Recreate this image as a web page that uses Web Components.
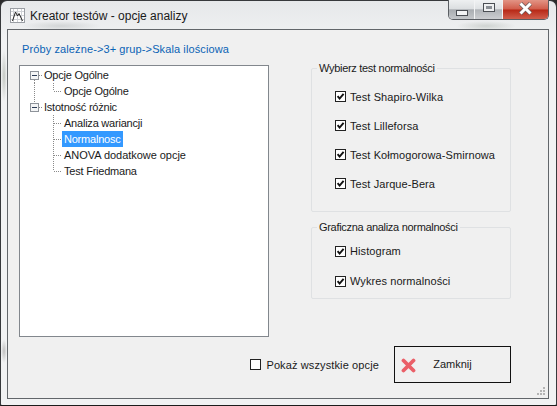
<!DOCTYPE html>
<html lang="pl"><head><meta charset="utf-8">
<style>
html,body{margin:0;padding:0;width:557px;height:406px;overflow:hidden;background:#2a2a2a;font:11px "Liberation Sans",Arial,sans-serif;color:#1a1a1a}
</style></head><body>
<x-window>
  <x-titlebar slot="title">Kreator testów - opcje analizy</x-titlebar>
  <x-path>Próby zależne-&gt;3+ grup-&gt;Skala ilościowa</x-path>
  <x-tree slot="left">
    <x-node top first>Opcje Ogólne</x-node>
    <x-node child through last>Opcje Ogólne</x-node>
    <x-node top final>Istotność różnic</x-node>
    <x-node child>Analiza wariancji</x-node>
    <x-node child selected>Normalnosc</x-node>
    <x-node child style="letter-spacing:-.04px">ANOVA dodatkowe opcje</x-node>
    <x-node child last>Test Friedmana</x-node>
  </x-tree>
  <x-group slot="right" label="Wybierz test normalności" style="height:144px;--first:13px">
    <x-check checked>Test Shapiro-Wilka</x-check>
    <x-check checked>Test Lilleforsa</x-check>
    <x-check checked>Test Kołmogorowa-Smirnowa</x-check>
    <x-check checked>Test Jarque-Bera</x-check>
  </x-group>
  <x-group slot="right" label="Graficzna analiza normalności" style="height:72px;--first:8px;--rh:30px">
    <x-check checked>Histogram</x-check>
    <x-check checked>Wykres normalności</x-check>
  </x-group>
  <x-check slot="footer" style="margin:0 15px 0 0;--gap:5px;--ls:.12px">Pokaż wszystkie opcje</x-check>
  <x-button slot="footer">Zamknij</x-button>
</x-window>
<script>
function def(name, html){
  customElements.define(name, class extends HTMLElement{
    connectedCallback(){
      if(this.shadowRoot) return;
      const r=this.attachShadow({mode:'open'});
      r.innerHTML = typeof html==='function' ? html(this) : html;
    }
  });
}
def('x-window',`<style>
:host{display:block;width:557px;height:406px;box-sizing:border-box}
.frame{box-sizing:border-box;width:557px;height:406px;border-radius:7px 7px 2px 2px;border:1px solid #37393c;border-bottom-color:#1c1c1c;
 background:
  radial-gradient(ellipse 40px 5px at 60px 25px,#d2d5d6,transparent),
  radial-gradient(ellipse 30px 5px at 485px 25px,#cfd3d1,transparent),
  radial-gradient(ellipse 3px 26px at 3px 75px,#c3c7c2,transparent),
  radial-gradient(ellipse 3px 12px at 3px 350px,#bfbfbf,transparent),
  linear-gradient(#e6e8ea,#f1f2f3 40px);
 display:flex;flex-direction:column;padding:0 7px 6px 6px}
.client{flex:1;border:1px solid #62666a;background:#f0f0f0;display:flex;flex-direction:column;padding:11px 37px 0 11px;box-sizing:border-box;min-height:0;position:relative}
.main{display:flex;justify-content:space-between;margin-top:8px}
.right{display:flex;flex-direction:column;gap:15px;width:200px;padding-top:3px}
.foot{display:flex;justify-content:flex-end;align-items:center;margin-top:9px}
.grip{position:absolute;right:2px;bottom:2px}
</style><div class="frame"><slot name="title"></slot><div class="client"><slot></slot>
<div class="main"><slot name="left"></slot><div class="right"><slot name="right"></slot></div></div>
<div class="foot"><slot name="footer"></slot></div>
<svg class="grip" width="11" height="11" fill="#b4b4b4"><rect x="8" y="2" width="2" height="2"/><rect x="8" y="5" width="2" height="2"/><rect x="8" y="8" width="2" height="2"/><rect x="5" y="5" width="2" height="2"/><rect x="5" y="8" width="2" height="2"/><rect x="2" y="8" width="2" height="2"/></svg>
</div></div>`);
def('x-titlebar',`<style>
:host{display:flex;height:28px;flex:none;position:relative;align-items:flex-start}
.ic{margin:7px 0 0 3px;flex:none}
.t{margin:7px 0 0 5px;font:12px/16px "Liberation Sans",Arial,sans-serif;color:#1a1a1a}
.btns{position:absolute;right:0;top:-1px;display:flex;height:20px;border:1px solid #5a5e63;border-top:0;border-radius:0 0 5px 5px;overflow:hidden;box-sizing:border-box}
.b{height:100%;display:flex;align-items:center;justify-content:center;box-sizing:border-box}
.m{width:26px;background:linear-gradient(#eef0f1 0,#dcdfe1 45%,#a9adb1 52%,#c4c7ca 100%);border-right:1px solid #f2f3f4}
.x{width:28px;background:linear-gradient(#f0f2f3 0,#dfe2e4 45%,#b0b4b8 52%,#ccced1 100%);border-right:1px solid #f2f3f4}
.c{width:45px;background:linear-gradient(#e29485 0,#d2604e 45%,#b82a18 54%,#d05e4c 100%)}
</style>
<svg class="ic" width="15" height="15" viewBox="0 0 15 15"><rect width="15" height="15" fill="#fff"/><path d="M0 3.5H15M0 7.5H15M0 11.5H15M3.5 0V15M7.5 0V15M11.5 0V15" stroke="#cfd2d6"/><rect x=".5" y=".5" width="14" height="14" fill="none" stroke="#9a9ea4"/><path d="M2.5 13L5.5 4L7.5 8L9 5.5L12.5 13" fill="none" stroke="#222" stroke-width="1"/></svg>
<span class="t"><slot></slot></span>
<div class="btns"><div class="b m"><svg width="12" height="6" style="margin-top:6px"><rect x=".5" y=".5" width="11" height="5" fill="#f2f3f4" stroke="#4a4e53"/></svg></div>
<div class="b x"><svg width="12" height="9" style="margin-bottom:5px"><rect x=".5" y=".5" width="11" height="8" fill="#eef0f1" stroke="#4a4e53"/><rect x="3" y="3" width="6" height="3" fill="#8a8f95"/></svg></div>
<div class="b c"><svg width="15" height="13" viewBox="0 0 15 13" style="margin-bottom:2px"><path d="M2.5 1.5L12.5 11.5M12.5 1.5L2.5 11.5" stroke="#6a5a58" stroke-width="4.4"/><path d="M2.5 1.5L12.5 11.5M12.5 1.5L2.5 11.5" stroke="#fff" stroke-width="3"/></svg></div></div>`);
def('x-path',`<style>:host{display:block;color:#0b63b5;line-height:16px;padding-left:3px;letter-spacing:.11px}</style><slot></slot>`);
def('x-tree',`<style>:host{display:block;box-sizing:border-box;width:250px;height:272px;background:#fff;border:1px solid #82878d;padding-top:1px;letter-spacing:-.22px}</style><slot></slot>`);
def('x-node',e=>{
  const top=e.hasAttribute('top'),sel=e.hasAttribute('selected');
  const dash='stroke="#8a8a8a" stroke-dasharray="1 1"';
  let s;
  if(top){
    s=`<svg width="22" height="16">`;
    if(e.hasAttribute('first')) s+=`<path d="M14.5 13V16" ${dash}/>`;
    if(e.hasAttribute('final')) s+=`<path d="M14.5 0V4" ${dash}/>`;
    s+=`<path d="M19 8.5H22" ${dash}/><rect x="10.5" y="4.5" width="8" height="8" fill="#f4f5f6" stroke="#8e939a"/><path d="M12 8.5H17" stroke="#2b3b55"/></svg>`;
  }else{
    s=`<svg width="42" height="16">`;
    if(e.hasAttribute('through')) s+=`<path d="M14.5 0V16" ${dash}/>`;
    s+=`<path d="M33.5 0V${e.hasAttribute('last')?8:16}" ${dash}/><path d="M34 8.5H42" ${dash}/></svg>`;
  }
  return `<style>:host{display:flex;height:16px;align-items:center}
  svg{flex:none;display:block}
  .l{padding:0 2px;line-height:16px;height:16px;white-space:nowrap;${sel?'background:#3399ff;color:#fff;':''}}</style>${s}<span class="l"><slot></slot></span>`;
});
def('x-group',e=>`<style>:host{display:block;box-sizing:border-box;border:1px solid #dfe1e3;border-radius:2px;position:relative;padding:var(--first,13px) 0 0 23px}
.cap{position:absolute;left:5px;top:-8px;background:#f0f0f0;padding:0 2px;line-height:14px;white-space:nowrap;letter-spacing:-.3px}</style>
<div class="cap">${e.getAttribute('label')}</div><slot></slot>`);
def('x-check',e=>`<style>:host{display:flex;align-items:center;height:var(--rh,29px);white-space:nowrap;letter-spacing:var(--ls,.08px)}
svg{flex:none;margin-right:var(--gap,4px)}
</style><svg width="11" height="11"><rect x=".5" y=".5" width="10" height="10" fill="#fff" stroke="#222"/>${e.hasAttribute('checked')?'<path d="M2.6 5.2L4.6 7.6L8.6 2.8" fill="none" stroke="#111" stroke-width="1.9"/>':''}</svg><span><slot></slot></span>`);
def('x-button',`<style>:host{display:block;box-sizing:border-box;width:117px;height:37px;border:1px solid #111;background:#f0f0f0;position:relative;flex:none;text-align:center;line-height:34px}
svg{position:absolute;left:6px;top:11px}</style>
<svg width="15" height="15" viewBox="0 0 15 15"><path d="M2.5 2.5L12.5 12.5M12.5 2.5L2.5 12.5" stroke="#ea5f68" stroke-width="3.8" stroke-linecap="round"/></svg><slot></slot>`);
</script>
</body></html>
